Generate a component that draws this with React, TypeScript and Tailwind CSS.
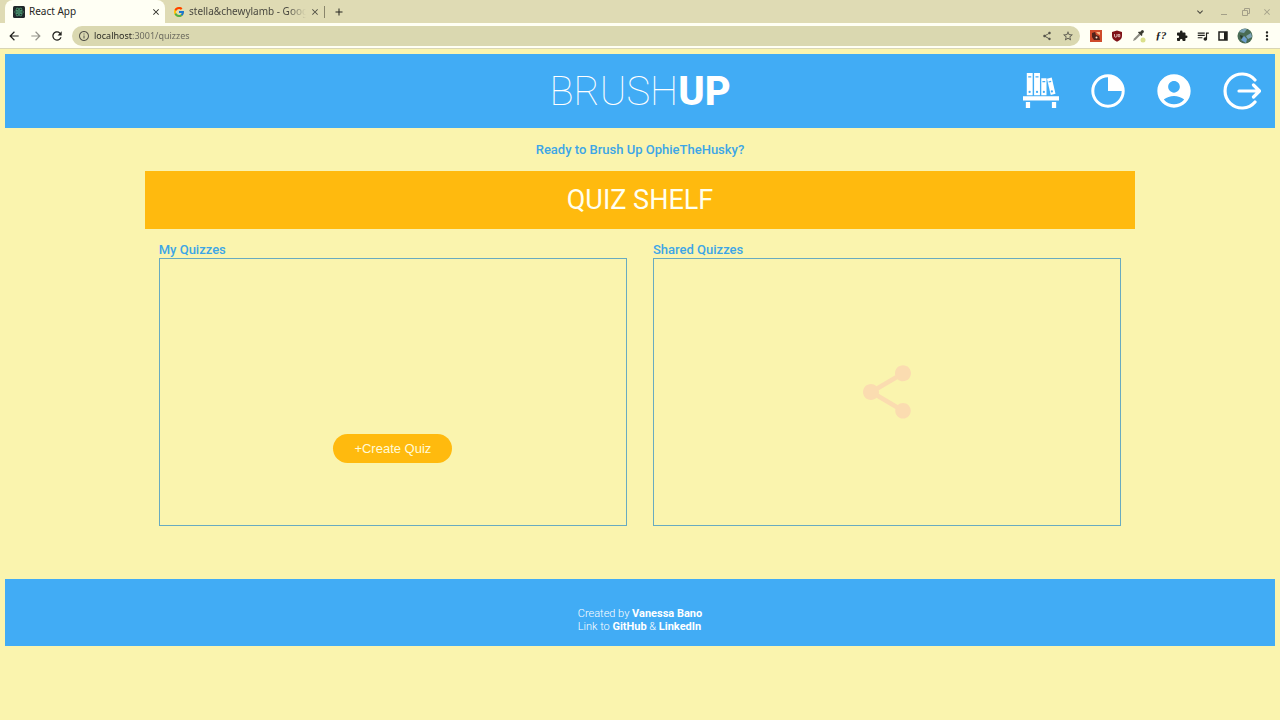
import type { ReactNode } from "react";
import {
  MdArrowBack,
  MdArrowForward,
  MdRefresh,
  MdInfoOutline,
  MdShare,
  MdStarOutline,
  MdExtension,
  MdQueueMusic,
  MdMoreVert,
  MdAccountCircle,
  MdClose,
  MdAdd,
  MdExpandMore,
} from "react-icons/md";
import { FcGoogle } from "react-icons/fc";

function IconButton({ label, className, children }: { label: string; className?: string; children: ReactNode }) {
  return (
    <button type="button" aria-label={label} className={`flex shrink-0 items-center justify-center ${className ?? ""}`}>
      {children}
    </button>
  );
}

function ReactFavicon() {
  return (
    <svg viewBox="0 0 24 24" className="size-3 shrink-0" aria-hidden="true">
      <rect width="24" height="24" rx="3" fill="#20272b" />
      <g fill="none" stroke="#4c9c74" strokeWidth="1.5">
        <ellipse cx="12" cy="12" rx="9" ry="3.6" />
        <ellipse cx="12" cy="12" rx="9" ry="3.6" transform="rotate(60 12 12)" />
        <ellipse cx="12" cy="12" rx="9" ry="3.6" transform="rotate(120 12 12)" />
      </g>
      <circle cx="12" cy="12" r="2" fill="#4c9c74" />
    </svg>
  );
}

function TabStrip() {
  return (
    <div className="flex h-[23px] items-stretch bg-[#dfdbb4] text-[10px] text-[#4a4940]">
      <div className="ml-[5px] flex w-40 items-center rounded-t-lg bg-[#fffff4] pr-1 pl-2 text-[#25251f]">
        <ReactFavicon />
        <span className="ml-1 flex-1">React App</span>
        <IconButton label="Close React App"><MdClose className="size-2.5" /></IconButton>
      </div>
      <div className="flex w-[159px] items-center pr-1 pl-2">
        <FcGoogle className="size-3 shrink-0" />
        <span className="ml-1 flex-1 overflow-hidden whitespace-nowrap [mask-image:linear-gradient(to_right,black_85%,transparent)]">
          stella&amp;chewylamb - Goog
        </span>
        <IconButton label="Close search tab" className="ml-1"><MdClose className="size-2.5" /></IconButton>
      </div>
      <div className="my-auto h-3 w-px bg-[#89856b]" />
      <IconButton label="New tab" className="w-7 text-[#25251f]"><MdAdd className="size-3" /></IconButton>
      <div className="ml-auto flex items-center gap-3 pr-2 text-[#a39f88]">
        <IconButton label="Search tabs" className="text-[#4a4940]"><MdExpandMore className="size-3" /></IconButton>
        <IconButton label="Minimize">
          <svg viewBox="0 0 12 12" className="size-3" stroke="currentColor"><path d="M3 8.5h6" /></svg>
        </IconButton>
        <IconButton label="Restore" className="-mx-0.5">
          <svg viewBox="0 0 12 12" className="size-3" fill="none" stroke="currentColor"><path d="M2.500 4.500h5v5h-5zM4.500 4.500v-2h5v5h-2" /></svg>
        </IconButton>
        <IconButton label="Close window"><MdClose className="size-2.5" /></IconButton>
      </div>
    </div>
  );
}

function Toolbar() {
  return (
    <div className="flex h-[26px] items-center border-b border-[#d9d5b4] bg-[#fffff4] pr-2 pl-[7px] text-[#20201c]">
      <IconButton label="Back" className="mr-2"><MdArrowBack className="size-3.5" /></IconButton>
      <IconButton label="Forward" className="mr-[7px] text-[#94938a]"><MdArrowForward className="size-3.5" /></IconButton>
      <IconButton label="Reload" className="mr-2"><MdRefresh className="size-3.5" /></IconButton>
      <div className="flex h-5 flex-1 items-center rounded-full bg-[#dad8b0] pr-1.5 pl-1.5 text-[#55544a]">
        <MdInfoOutline className="size-3 shrink-0" />
        <input
          aria-label="Address"
          defaultValue="localhost:3001/quizzes"
          className="mx-1 h-4 min-w-0 flex-1 bg-[linear-gradient(to_right,#25251f_38px,#66655a_38px)] bg-clip-text text-[9px] leading-4 text-transparent outline-none"
        />
        <IconButton label="Share page" className="mr-2.5"><MdShare className="size-2.5" /></IconButton>
        <IconButton label="Bookmark"><MdStarOutline className="size-3" /></IconButton>
      </div>
      <div className="ml-2.5 flex items-center gap-[9px]">
        <IconButton label="Screen capture">
          <svg viewBox="0 0 12 12" className="size-3">
            <rect width="12" height="12" fill="#cf4b2b" />
            <path d="M2 3l3-1 1 3 3 1 1 4H4L2 7z" fill="#50221a" />
            <path d="M6 2h4v3L8 4z" fill="#f5b987" />
            <circle cx="6.500" cy="7.500" r="1" fill="#f8e3cf" />
          </svg>
        </IconButton>
        <IconButton label="Content blocker">
          <svg viewBox="0 0 12 12" className="size-3">
            <path d="M6 .5 11 2v4q0 3.500-5 5.700Q1 9.500 1 6V2z" fill="#7f1218" />
            <path d="M3.500 4v2q0 1.200 1.200 1.200T6 6V4M7.200 4.500h1.600v2.200H7.200z" fill="none" stroke="#f0d9d4" strokeWidth=".8" />
          </svg>
        </IconButton>
        <IconButton label="Color picker">
          <svg viewBox="0 0 14 14" className="size-3.5">
            <path d="m1 12 1-2.500 5-5 1.500 1.500-5 5z" fill="#8b8b82" />
            <path d="m6 3.500 1-1 1 .5L10 1q2 0 2 2l-2 2 .5 1-1 1z" fill="#39392f" />
            <circle cx="11" cy="11" r="2.500" fill="#dbe08b" />
          </svg>
        </IconButton>
        <IconButton label="Font finder" className="w-3 font-['Liberation_Serif',serif] text-[11px] font-bold italic">ƒ?</IconButton>
        <IconButton label="Extensions"><MdExtension className="size-3" /></IconButton>
        <IconButton label="Media controls" className="-mx-px"><MdQueueMusic className="size-3.5" /></IconButton>
        <IconButton label="Side panel">
          <svg viewBox="0 0 10 10" className="size-2.5">
            <path d="M1 1h8v8H1z" fill="none" stroke="currentColor" strokeWidth="1.500" />
            <path d="M6 1h3v8H6z" fill="currentColor" />
          </svg>
        </IconButton>
        <IconButton label="Profile">
          <svg viewBox="0 0 16 16" className="size-4">
            <circle cx="8" cy="8" r="7.500" fill="#496b54" />
            <path d="M2 4q3-4 8-3L7 5zM9 8l5-3 1 4-4 2z" fill="#7ba2b5" />
            <path d="m4 12 3-4 3 3-1 4z" fill="#6e9fd0" />
            <path d="m3 7 3 1-2 3z" fill="#26382a" />
          </svg>
        </IconButton>
        <IconButton label="Menu" className="-mx-0.5"><MdMoreVert className="size-3.5" /></IconButton>
      </div>
    </div>
  );
}

function ShelfIcon() {
  return (
    <svg viewBox="0 0 38 38" className="size-9" aria-hidden="true">
      <path d="M0 24.500h38V29H0zM3 30.500h4.500V37H3zM30.500 30.500H35V37h-4.500z" fill="#fff" />
      <path d="M4 0h6.200v23.500H4zM11.700 0h6.200v23.500h-6.200zM19.300 5.500h5.500v18h-5.500z" fill="#fff" />
      <path d="m25.300 6 5-1.200 4 17.200-5 1.300z" fill="#fff" />
      <path d="M5.500 4h3.200M13.200 4h3.200M20.500 9h3M27 9.500l2.700-.7" stroke="#41acf5" strokeWidth="1.300" />
      <g fill="#41acf5">
        <circle cx="7" cy="20" r="1.200" />
        <circle cx="14.800" cy="20" r="1.200" />
        <circle cx="22" cy="20" r="1.200" />
        <circle cx="30.500" cy="19.500" r="1.200" />
      </g>
    </svg>
  );
}

function ProgressIcon() {
  return (
    <svg viewBox="0 0 34 34" className="size-[34px]" aria-hidden="true">
      <circle cx="17" cy="17" r="15.200" fill="none" stroke="#fff" strokeWidth="3" />
      <path d="M17 1v16h16A16 16 0 0 0 17 1" fill="#fff" />
    </svg>
  );
}

function LogoutIcon() {
  return (
    <svg viewBox="0 0 38 38" className="size-[38px]" fill="none" stroke="#fff" strokeWidth="3.200" strokeLinecap="round" strokeLinejoin="round" aria-hidden="true">
      <path d="M32 8A17 17 0 1 0 32 30" />
      <path d="M16 19h20M30.500 13l6 6-6 6" />
    </svg>
  );
}

function SiteHeader() {
  return (
    <header className="grid h-[74px] grid-cols-[1fr_auto_1fr] items-center bg-[#41acf5] text-white">
      <a href="/" className="col-start-2 pt-0.5 text-[40px] leading-none font-thin">
        BRUSH<span className="font-extrabold">UP</span>
      </a>
      <nav className="flex items-center gap-8 justify-self-end pr-3.5">
        <a href="/quizzes" aria-label="Quizzes"><ShelfIcon /></a>
        <a href="/progress" aria-label="Progress"><ProgressIcon /></a>
        <a href="/profile" aria-label="Profile" className="-mx-[3px]"><MdAccountCircle className="size-10" /></a>
        <a href="/logout" aria-label="Log out"><LogoutIcon /></a>
      </nav>
    </header>
  );
}

function QuizPanel({ title, children }: { title: string; children: ReactNode }) {
  return (
    <section className="flex-1">
      <h2 className="text-[13px] leading-4 font-medium">{title}</h2>
      <div className="flex h-[268px] justify-center border border-[#68abc0]">{children}</div>
    </section>
  );
}

export default function App() {
  return (
    <div className="min-h-screen bg-[#faf4ae] font-['Roboto',sans-serif]">
      <div className="font-['Noto_Sans',sans-serif]">
        <TabStrip />
        <Toolbar />
      </div>
      <div className="px-[5px] pt-[5px]">
        <SiteHeader />
        <main className="mx-auto w-[78%] text-[#3da6e6]">
          <p className="py-3 text-center text-[13px] leading-[19px] font-medium">Ready to Brush Up OphieTheHusky?</p>
          <h1 className="bg-[#ffba0e] text-center text-[27px] leading-[58px] text-[#fffff0]">QUIZ SHELF</h1>
          <div className="flex gap-[26px] px-3.5 pt-[13px] pb-[53px]">
            <QuizPanel title="My Quizzes">
              <button type="button" className="mt-auto mb-[62px] h-[29px] rounded-full bg-[#ffba0e] px-[21px] font-['Liberation_Sans',sans-serif] text-[13px] text-[#fffbd8]">
                +Create Quiz
              </button>
            </QuizPanel>
            <QuizPanel title="Shared Quizzes">
              <MdShare className="mt-[101px] size-16 text-[#fbdcb0]" />
            </QuizPanel>
          </div>
        </main>
        <footer className="flex justify-center bg-[#41acf5] pt-7 pb-[13px] text-[11px] leading-[13px] font-light text-white">
          <div>
            <p>Created by <a href="#creator" className="font-bold">Vanessa Bano</a></p>
            <p>
              Link to <a href="#github" className="font-bold">GitHub</a> &amp; <a href="#linkedin" className="font-bold">LinkedIn</a>
            </p>
          </div>
        </footer>
      </div>
    </div>
  );
}
